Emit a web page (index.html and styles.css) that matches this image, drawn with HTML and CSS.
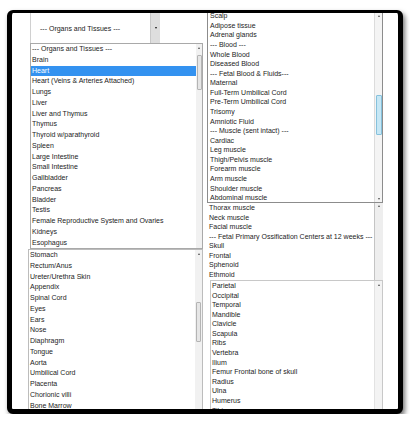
FILE: index.html
```html
<!DOCTYPE html>
<html>
<head>
<meta charset="utf-8">
<link rel="stylesheet" href="styles.css">
</head>
<body>
<div class="frame">
  <div class="cols">
    <div class="col left">
      <div class="select">
        <span class="select-text">--- Organs and Tissues ---</span>
        <span class="select-btn"><span class="tri-down"></span></span>
      </div>
      <div class="list l1">
        <div class="items">
          <div class="it">--- Organs and Tissues ---</div>
          <div class="it">Brain</div>
          <div class="it sel">Heart</div>
          <div class="it">Heart (Veins &amp; Arteries Attached)</div>
          <div class="it">Lungs</div>
          <div class="it">Liver</div>
          <div class="it">Liver and Thymus</div>
          <div class="it">Thymus</div>
          <div class="it">Thyroid w/parathyroid</div>
          <div class="it">Spleen</div>
          <div class="it">Large Intestine</div>
          <div class="it">Small Intestine</div>
          <div class="it">Gallbladder</div>
          <div class="it">Pancreas</div>
          <div class="it">Bladder</div>
          <div class="it">Testis</div>
          <div class="it">Female Reproductive System and Ovaries</div>
          <div class="it">Kidneys</div>
          <div class="it">Esophagus</div>
        </div>
        <div class="sb">
          <div class="arrow up"></div>
          <div class="thumb t1"></div>
        </div>
      </div>
      <div class="list l2">
        <div class="items">
          <div class="it">Stomach</div>
          <div class="it">Rectum/Anus</div>
          <div class="it">Ureter/Urethra Skin</div>
          <div class="it">Appendix</div>
          <div class="it">Spinal Cord</div>
          <div class="it">Eyes</div>
          <div class="it">Ears</div>
          <div class="it">Nose</div>
          <div class="it">Diaphragm</div>
          <div class="it">Tongue</div>
          <div class="it">Aorta</div>
          <div class="it">Umbilical Cord</div>
          <div class="it">Placenta</div>
          <div class="it">Chorionic villi</div>
          <div class="it">Bone Marrow</div>
          <div class="it">Blood</div>
        </div>
        <div class="sb">
          <div class="arrow up"></div>
          <div class="thumb t2"></div>
        </div>
      </div>
    </div>
    <div class="col right">
      <div class="list r1">
        <div class="items">
          <div class="it">Scalp</div>
          <div class="it">Adipose tissue</div>
          <div class="it">Adrenal glands</div>
          <div class="it">--- Blood ---</div>
          <div class="it">Whole Blood</div>
          <div class="it">Diseased Blood</div>
          <div class="it">--- Fetal Blood &amp; Fluids---</div>
          <div class="it">Maternal</div>
          <div class="it">Full-Term Umbilical Cord</div>
          <div class="it">Pre-Term Umbilical Cord</div>
          <div class="it">Trisomy</div>
          <div class="it">Amniotic Fluid</div>
          <div class="it">--- Muscle (sent intact) ---</div>
          <div class="it">Cardiac</div>
          <div class="it">Leg muscle</div>
          <div class="it">Thigh/Pelvis muscle</div>
          <div class="it">Forearm muscle</div>
          <div class="it">Arm muscle</div>
          <div class="it">Shoulder muscle</div>
          <div class="it">Abdominal muscle</div>
        </div>
        <div class="sb">
          <div class="arrow up small"></div>
          <div class="thumb t3"></div>
          <div class="arrow down small"></div>
        </div>
      </div>
      <div class="list r2">
        <div class="items">
          <div class="it">Thorax muscle</div>
          <div class="it">Neck muscle</div>
          <div class="it">Facial muscle</div>
          <div class="it">--- Fetal Primary Ossification Centers at 12 weeks ---</div>
          <div class="it">Skull</div>
          <div class="it">Frontal</div>
          <div class="it">Sphenoid</div>
          <div class="it">Ethmoid</div>
        </div>
        <div class="sb">
          <div class="arrow up small"></div>
        </div>
      </div>
      <div class="list r3">
        <div class="items">
          <div class="it">Parietal</div>
          <div class="it">Occipital</div>
          <div class="it">Temporal</div>
          <div class="it">Mandible</div>
          <div class="it">Clavicle</div>
          <div class="it">Scapula</div>
          <div class="it">Ribs</div>
          <div class="it">Vertebra</div>
          <div class="it">Ilium</div>
          <div class="it">Femur Frontal bone of skull</div>
          <div class="it">Radius</div>
          <div class="it">Ulna</div>
          <div class="it">Humerus</div>
          <div class="it">Tibia</div>
        </div>
        <div class="sb">
          <div class="arrow up"></div>
        </div>
      </div>
    </div>
  </div>
</div>
</body>
</html>
```
FILE: styles.css
```css
html, body {
  margin: 0;
  padding: 0;
  background: #ffffff;
}
body {
  font-family: "Liberation Sans", Arial, sans-serif;
  font-size: 7px;
  color: #1c1c1c;
}
.frame {
  box-sizing: border-box;
  margin: 10px 0 0 7px;
  width: 396px;
  height: 404px;
  border-style: solid;
  border-color: #000;
  border-width: 3px 5px 5px 5px;
  border-radius: 6px;
  background: #fff;
  box-shadow: 2px 3px 5px rgba(0, 0, 0, 0.55);
  overflow: hidden;
}
.cols {
  display: grid;
  grid-template-columns: 175px 176px;
  column-gap: 4px;
  padding-left: 16px;
  height: 100%;
}
.col {
  display: flex;
  flex-direction: column;
  min-height: 0;
  overflow: hidden;
}
.select {
  box-sizing: border-box;
  margin-left: 2px;
  width: 130px;
  height: 30px;
  flex: none;
  display: flex;
  align-items: center;
  border-left: 1px solid #d0d0d0;
}
.select-text {
  flex: 1;
  padding-left: 9px;
  color: #222;
}
.select-btn {
  width: 9px;
  align-self: stretch;
  background: #dedede;
  border-left: 1px solid #c8c8c8;
  display: flex;
  align-items: center;
  justify-content: center;
}
.tri-down {
  width: 0;
  height: 0;
  border-left: 1.5px solid transparent;
  border-right: 1.5px solid transparent;
  border-top: 2px solid #111;
}
.list {
  box-sizing: border-box;
  display: flex;
  flex: none;
  overflow: hidden;
  background: #fff;
}
.items {
  flex: 1;
  min-width: 0;
  overflow: hidden;
}
.it {
  white-space: nowrap;
  overflow: hidden;
}
.sb {
  flex: none;
  display: flex;
  flex-direction: column;
  align-items: center;
  background: #f1f1f1;
}
.arrow {
  flex: none;
  width: 100%;
  height: 8px;
  display: flex;
  align-items: center;
  justify-content: center;
}
.arrow.small {
  height: 6px;
}
.arrow::before {
  content: "";
  width: 0;
  height: 0;
  border-left: 1.5px solid transparent;
  border-right: 1.5px solid transparent;
}
.arrow.up::before {
  border-bottom: 2px solid #505050;
}
.arrow.down::before {
  border-top: 2px solid #505050;
}
.arrow.down {
  margin-top: auto;
}
.thumb {
  box-sizing: border-box;
  flex: none;
  width: 5px;
  background: #e6e6e6;
  border: 1px solid #b4b4b4;
  border-radius: 1px;
}

/* left lists */
.l1 {
  margin-left: 2px;
  height: 206px;
  border: 1px solid #a9a9a9;
}
.l1 .it {
  height: 10.78px;
  line-height: 10.78px;
  padding-left: 1px;
}
.l1 .it.sel {
  background: #3392f0;
  color: #fff;
}
.l1 .sb {
  width: 6px;
}
.t1 {
  margin-top: 3px;
  height: 35px;
}
.l2 {
  flex: 1;
  border: 1px solid #bcbcbc;
  border-bottom: none;
}
.l2 .it {
  height: 10.78px;
  line-height: 10.78px;
  padding-left: 1px;
}
.l2 .sb {
  width: 7px;
}
.t2 {
  margin-top: 44px;
  height: 40px;
}

/* right lists */
.r1 {
  height: 190px;
  border: 1px solid #8c8c8c;
  border-top: none;
}
.r1 .items {
  margin-top: -1.8px;
}
.r1 .it,
.r2 .it,
.r3 .it {
  height: 9.58px;
  line-height: 9.58px;
  padding-left: 2px;
}
.r1 .sb {
  width: 7px;
  background: #f4f4f4;
  border-left: 1px solid #dcdcdc;
}
.t3 {
  margin-top: 76px;
  height: 40px;
  width: 6px;
  background: #c6e7f5;
  border-color: #86c1dc;
}
.r2 {
  height: 77px;
}
.r2 .sb {
  width: 8px;
  background: #eeeeee;
  border-left: 1px solid #c4c4c4;
}
.r3 {
  flex: 1;
  margin-left: 3px;
  border: 1px solid #c8c8c8;
  border-bottom: none;
}
.r3 .it {
  padding-left: 1px;
}
.r3 .sb {
  width: 7px;
  background: #f3f3f3;
  border-left: 1px solid #e2e2e2;
}
```
